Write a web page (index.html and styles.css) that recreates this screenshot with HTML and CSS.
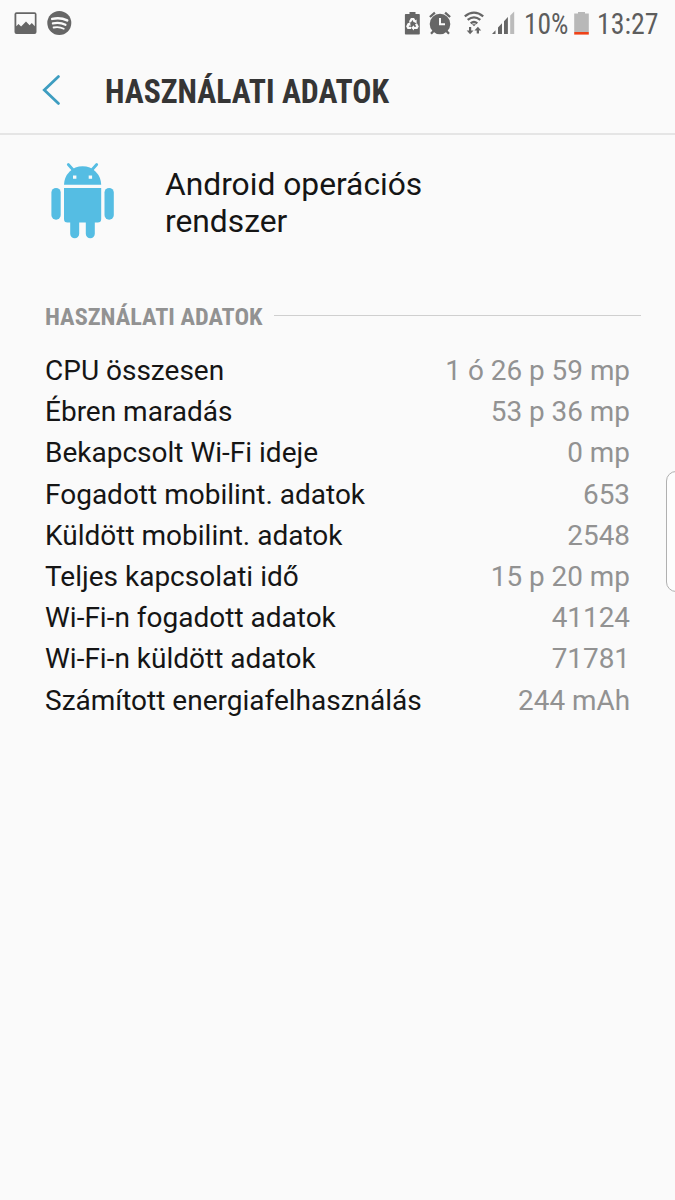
FILE: index.html
```
<!DOCTYPE html>
<html lang="hu">
<head>
<meta charset="utf-8">
<title>Használati adatok</title>
<link rel="stylesheet" href="styles.css">
</head>
<body>
<div class="screen">
  <div class="status">
    <svg class="status-left" width="80" height="46" viewBox="0 0 80 46">
      <path fill="#666" fill-rule="evenodd" d="M16.500 12.300h18a2 2 0 0 1 2 2v17.700a2 2 0 0 1-2 2h-18a2 2 0 0 1-2-2v-17.700a2 2 0 0 1 2-2zM16.300 14.100v12.100l2.200-2.200 2.600 2.500 4.900-4.900 3.600 3.600 2.200-2.200 3 3.200v-12.100z"/>
      <circle cx="59.300" cy="23" r="12" fill="#666"/>
      <g fill="none" stroke="#fafafa" stroke-linecap="round">
        <path stroke-width="2.500" d="M52.200 18.900q8-2 15 1.500"/>
        <path stroke-width="2.200" d="M52.900 23.400q7-1.500 12.600 1.400"/>
        <path stroke-width="1.800" d="M53.600 27.500q5.500-1.200 10.200 1.200"/>
      </g>
    </svg>
    <svg class="status-icons" width="115" height="46" viewBox="400 0 115 46">
      <path fill="#666" d="M409.500 12h6v2h3.500q.8 0 .8.800v19q0 .8-.8.800h-13.300q-.8 0-.8-.8v-19q0-.8.800-.8h3.800z"/>
      <g fill="none" stroke="#fafafa" stroke-width="2.300">
        <path d="M409.900 22l1.700-2.900h1.800l1.500 2.600"/>
        <path d="M416 23.800l1.500 2.600-.8 1.500h-3.600"/>
        <path d="M411 27.900h-2.800l-.8-1.500 1.700-2.900"/>
      </g>
      <path fill="#fafafa" d="M416.600 19.500v4l-3.500-1.900zM414 25.200v5.200l-3-2.600zM406.700 24.300l3.400-2.200.5 3.800z"/>
      <circle cx="440" cy="24" r="10.300" fill="#666"/>
      <path fill="none" stroke="#666" stroke-width="2.300" d="M429.900 17l5-4.300M450.100 17l-5-4.300M434 30.500l-3 3.200M446 30.500l3 3.200"/>
      <path fill="none" stroke="#fafafa" stroke-width="2" d="M440 18v6.200h5"/>
      <g fill="none" stroke="#666" stroke-width="2.300">
        <path d="M464.800 16.300q9.200-7.400 18.400 0M467.700 19.900q6.300-5 12.600 0"/>
        <path d="M470.700 23.300q3.300-2.600 6.600 0"/>
      </g>
      <path fill="#666" d="M471.900 24.200h4.200l-2.100 2zM469 27h2.200v3.600h2.300l-3.400 3.700-3.400-3.700h2.300zM476.700 33.500h2.300v-3h2.200l-3.300-3.700-3.500 3.700h2.300z"/>
      <path fill="#666" d="M492 34l3.500-3.800v3.800zM498 27.500l4-4.300v10.800h-4zM504 21.300l3.900-4.200v16.900h-3.900z"/>
      <path fill="#bbb" d="M510.200 15.600l4-4v22.400h-4z"/>
    </svg>
    <svg class="status-right" width="160" height="46" viewBox="515 0 160 46">
      <text class="status-text" x="524" y="34" textLength="44.500" lengthAdjust="spacingAndGlyphs">10%</text>
      <path fill="#b8b8b8" d="M578 12h7v1.600h3.800v18.400h-14.600v-18.400h3.800z"/>
      <path fill="#ee4218" d="M574.200 32h14.600v2.600h-14.600z"/>
      <text class="status-text" x="597" y="34" textLength="61.500" lengthAdjust="spacingAndGlyphs">13:27</text>
    </svg>
  </div>
  <header class="header">
    <svg class="back" width="22" height="34" viewBox="0 0 22 34"><path d="M17.500 3.600L3.300 17l14.200 13.400" fill="none" stroke="#3d9dc0" stroke-width="2.800" stroke-linecap="round"/></svg>
    <svg class="title" width="300" height="44"><text class="title-text" x="0" y="34.500" textLength="284" lengthAdjust="spacingAndGlyphs">HASZNÁLATI ADATOK</text></svg>
  </header>
  <section class="app">
    <svg class="droid" width="66" height="78" viewBox="50 161 66 78" fill="#55bde3">
      <path d="M64 184.800a18.600 18.600 0 0 1 37.200 0z"/>
      <path d="M68.300 164.500l4.500 5M96.700 164.500l-4.500 5" stroke="#55bde3" stroke-width="2.800" stroke-linecap="round"/>
      <path d="M64 187.900h37.200v31a3.500 3.500 0 0 1-3.500 3.500h-30.200a3.500 3.500 0 0 1-3.500-3.500z"/>
      <rect x="51.400" y="188" width="9.300" height="31.700" rx="4.600"/>
      <rect x="104.500" y="188" width="9.300" height="31.700" rx="4.600"/>
      <path d="M70.200 221h9v12.700a4.500 4.500 0 0 1-9 0zM85.800 221h9v12.700a4.500 4.500 0 0 1-9 0z"/>
      <path fill="#fafafa" d="M73 175.500h3.400v3.200h-3.400zM88.700 175.500h3.400v3.200h-3.400z"/>
    </svg>
    <h1 class="name">Android operációs<br>rendszer</h1>
  </section>
  <div class="section">
    <svg width="218" height="32"><text class="section-text" x="0" y="25" textLength="217.500" lengthAdjust="spacingAndGlyphs">HASZNÁLATI ADATOK</text></svg>
    <div class="rule"></div>
  </div>
  <div class="rows">
    <div class="row"><span>CPU összesen</span><span class="value">1 ó 26 p 59 mp</span></div>
    <div class="row"><span>Ébren maradás</span><span class="value">53 p 36 mp</span></div>
    <div class="row"><span>Bekapcsolt Wi-Fi ideje</span><span class="value">0 mp</span></div>
    <div class="row"><span>Fogadott mobilint. adatok</span><span class="value">653</span></div>
    <div class="row"><span>Küldött mobilint. adatok</span><span class="value">2548</span></div>
    <div class="row"><span>Teljes kapcsolati idő</span><span class="value">15 p 20 mp</span></div>
    <div class="row"><span>Wi-Fi-n fogadott adatok</span><span class="value">41124</span></div>
    <div class="row"><span>Wi-Fi-n küldött adatok</span><span class="value">71781</span></div>
    <div class="row"><span>Számított energiafelhasználás</span><span class="value">244 mAh</span></div>
  </div>
  <div class="edge-handle"></div>
</div>
</body>
</html>
```
FILE: styles.css
```
* { box-sizing: border-box; }
body { margin: 0; }
svg { display: block; flex: none; }
.screen {
  position: relative;
  width: 675px;
  height: 1200px;
  overflow: hidden;
  background: #fafafa;
  font-family: Roboto, "Liberation Sans", sans-serif;
  color: #151515;
}
.status { display: flex; height: 46px; }
.status-icons { margin-left: 320px; }
.status-text {
  font-family: "Roboto Condensed", Roboto, sans-serif;
  font-stretch: condensed;
  font-size: 29px;
  fill: #5d5d5d;
}
.header {
  display: flex;
  height: 89px;
  padding: 22px 0 0 41px;
  border-bottom: 2px solid #e5e5e5;
}
.back { margin-top: 5px; }
.title { margin-left: 42px; }
.title-text, .section-text {
  font-family: "Roboto Condensed", Roboto, sans-serif;
  font-stretch: condensed;
  font-weight: 700;
}
.title-text { font-size: 32.5px; fill: #353535; }
.section-text { font-size: 24.5px; fill: #929292; }
.app {
  display: flex;
  height: 165px;
  padding: 26px 0 0 50px;
}
.name {
  margin: 5px 0 0 49px;
  font-size: 31.75px;
  font-weight: 400;
  line-height: 37px;
}
.section {
  display: flex;
  align-items: center;
  gap: 11px;
  height: 32px;
  padding: 0 34px 0 45px;
}
.rule { flex: 1; height: 1px; margin-bottom: 2px; background: #cfcfcf; }
.rows { padding: 18px 45px 0; }
.row {
  display: flex;
  justify-content: space-between;
  height: 41.2px;
  font-size: 28px;
  line-height: 41.2px;
  white-space: nowrap;
}
.value { color: #929292; font-size: 27.9px; }
.edge-handle {
  position: absolute;
  left: 666px;
  top: 471px;
  width: 20px;
  height: 121px;
  border: 1px solid #b0b0b0;
  border-radius: 10px;
  background: #fdfdfd;
}
```
